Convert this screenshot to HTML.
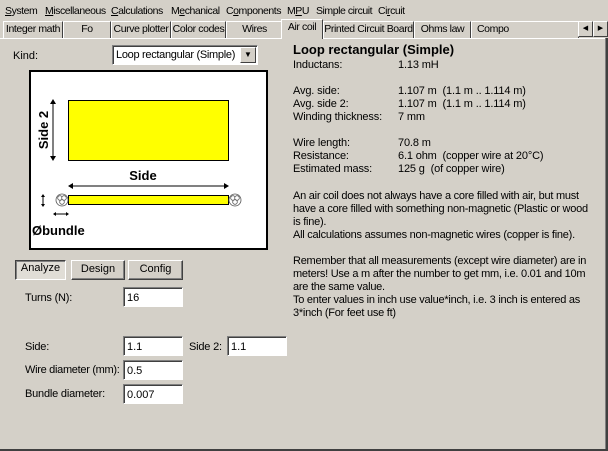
<!DOCTYPE html>
<html><head><style>
*{margin:0;padding:0;box-sizing:border-box}
body{width:608px;height:451px;background:#d4d0c8;font-family:"Liberation Sans",sans-serif;font-size:11px;color:#000;position:relative;overflow:hidden}
.a{position:absolute;white-space:nowrap}
.m{position:absolute;top:5px;font-size:10.5px;white-space:nowrap;letter-spacing:-0.45px}
.tab{position:absolute;top:21px;height:17px;border-top:1px solid #fff;border-left:1px solid #fff;border-right:1px solid #404040;text-align:center;line-height:15px;font-size:10.5px;white-space:nowrap;overflow:hidden;letter-spacing:-0.4px}
.inp{position:absolute;background:#fff;border-top:1px solid #808080;border-left:1px solid #808080;border-right:1px solid #fff;border-bottom:1px solid #fff;box-shadow:inset 1px 1px 0 #404040;height:20px;padding:4px 0 0 3px;font-size:11px;white-space:nowrap;overflow:hidden}
.btn{position:absolute;top:260px;height:20px;border-top:1px solid #fff;border-left:1px solid #fff;border-right:1px solid #404040;border-bottom:1px solid #404040;box-shadow:inset -1px -1px 0 #808080;text-align:center;line-height:17px;font-size:11px}
.r{position:absolute;left:293px;font-size:11px;line-height:11px;white-space:nowrap;letter-spacing:-0.15px}
.v{position:absolute;left:398px;font-size:11px;line-height:11px;white-space:nowrap;letter-spacing:-0.15px}
</style></head><body>
<div class="m" style="left:5px"><u>S</u>ystem</div>
<div class="m" style="left:45px"><u>M</u>iscellaneous</div>
<div class="m" style="left:111px"><u>C</u>alculations</div>
<div class="m" style="left:171px">M<u>e</u>chanical</div>
<div class="m" style="left:226px">C<u>o</u>mponents</div>
<div class="m" style="left:287px">M<u>P</u>U</div>
<div class="m" style="left:316px">Simple circuit</div>
<div class="m" style="left:378px">Ci<u>r</u>cuit</div>
<div class="tab" style="left:3px;width:60px">Integer math</div>
<div class="tab" style="left:63px;width:48px">Fo</div>
<div class="tab" style="left:111px;width:60px">Curve plotter</div>
<div class="tab" style="left:171px;width:55px">Color codes</div>
<div class="tab" style="left:226px;width:57px">Wires</div>
<div class="tab" style="left:281px;top:19px;height:20px;width:42px;background:#d4d0c8;border-bottom:none;z-index:2">Air coil</div>
<div class="tab" style="left:323px;width:91px">Printed Circuit Board</div>
<div class="tab" style="left:414px;width:57px">Ohms law</div>
<div class="tab" style="left:471px;width:108px;text-align:left;padding-left:5px">Compo</div>
<div class="a" style="left:578px;top:21px;width:15px;height:16px;background:#d4d0c8;border-top:1px solid #fff;border-left:1px solid #fff;border-right:1px solid #404040;border-bottom:1px solid #404040;font-size:7px;line-height:14px;text-align:center">◀</div>
<div class="a" style="left:593px;top:21px;width:15px;height:16px;background:#d4d0c8;border-top:1px solid #fff;border-left:1px solid #fff;border-right:1px solid #404040;border-bottom:1px solid #404040;font-size:7px;line-height:14px;text-align:center">▶</div>
<div class="a" style="left:0;top:38px;width:608px;height:1px;background:#fff"></div>
<div class="a" style="left:605px;top:38px;width:1px;height:412px;background:#808080"></div>
<div class="a" style="left:606px;top:38px;width:2px;height:413px;background:#404040"></div>
<div class="a" style="left:0;top:449px;width:608px;height:2px;background:#404040"></div>

<div class="a" style="left:13px;top:50px;font-size:11px">Kind:</div>
<div class="inp" style="left:112px;top:45px;width:146px;height:20px;padding-top:3px;letter-spacing:-0.3px">Loop rectangular (Simple)</div>
<div class="a" style="left:240px;top:47px;width:16px;height:16px;border-top:1px solid #fff;border-left:1px solid #fff;border-right:1px solid #404040;border-bottom:1px solid #404040;background:#d4d0c8;font-size:8px;text-align:center;line-height:14px">▼</div>

<svg class="a" style="left:29px;top:70px" width="239" height="180">
<rect x="1" y="1" width="237" height="178" fill="#fff" stroke="#000" stroke-width="2"/>
<rect x="39.5" y="30.5" width="160" height="60" fill="#ff0" stroke="#000"/>
<line x1="24" y1="30" x2="24" y2="90" stroke="#000"/>
<path d="M21,34 L24,29 L27,34Z M21,86 L24,91 L27,86Z"/>
<text transform="translate(19,60) rotate(-90)" text-anchor="middle" font-family="Liberation Sans" font-weight="bold" font-size="13">Side 2</text>
<text x="114" y="110" text-anchor="middle" font-family="Liberation Sans" font-weight="bold" font-size="13">Side</text>
<line x1="40" y1="116" x2="199" y2="116" stroke="#000"/>
<path d="M44,113 L39,116 L44,119Z M195,113 L200,116 L195,119Z"/>
<rect x="39.5" y="125.5" width="160" height="9" fill="#ff0" stroke="#000"/>
<g fill="#fff" stroke="#555" stroke-width="0.8">
<circle cx="33" cy="130" r="6"/><circle cx="31" cy="128" r="2.3"/><circle cx="35" cy="128" r="2.3"/><circle cx="33" cy="132" r="2.3"/>
<circle cx="206" cy="130" r="6"/><circle cx="204" cy="128" r="2.3"/><circle cx="208" cy="128" r="2.3"/><circle cx="206" cy="132" r="2.3"/>
</g>
<line x1="14" y1="125" x2="14" y2="136" stroke="#000"/>
<path d="M12,127 L14,124 L16,127Z M12,134 L14,137 L16,134Z"/>
<line x1="25" y1="144" x2="39" y2="144" stroke="#000"/>
<path d="M27,142 L24,144 L27,146Z M37,142 L40,144 L37,146Z"/>
<text x="3" y="165" font-family="Liberation Sans" font-weight="bold" font-size="13">Øbundle</text>
</svg>

<div class="btn" style="left:15px;width:51px;border-top-color:#404040;border-left-color:#404040;border-right-color:#fff;border-bottom-color:#fff;box-shadow:inset 1px 1px 0 #808080;background:#e0ddd6;line-height:15px">Analyze</div>
<div class="btn" style="left:71px;width:54px">Design</div>
<div class="btn" style="left:128px;width:55px">Config</div>

<div class="a" style="left:25px;top:292px;letter-spacing:-0.2px">Turns (N):</div>
<div class="inp" style="left:123px;top:287px;width:60px">16</div>
<div class="a" style="left:25px;top:341px;letter-spacing:-0.2px">Side:</div>
<div class="inp" style="left:123px;top:336px;width:60px">1.1</div>
<div class="a" style="left:189px;top:341px;letter-spacing:-0.2px">Side 2:</div>
<div class="inp" style="left:227px;top:336px;width:60px">1.1</div>
<div class="a" style="left:25px;top:364px;letter-spacing:-0.3px">Wire diameter (mm):</div>
<div class="inp" style="left:123px;top:360px;width:60px">0.5</div>
<div class="a" style="left:25px;top:388px;letter-spacing:-0.2px">Bundle diameter:</div>
<div class="inp" style="left:123px;top:384px;width:60px">0.007</div>

<div class="a" style="left:293px;top:42px;font-weight:bold;font-size:13px">Loop rectangular (Simple)</div>
<div class="r" style="top:60px">Inductans:</div><div class="v" style="top:60px">1.13 mH</div>
<div class="r" style="top:86px">Avg. side:</div><div class="v" style="top:86px">1.107 m&nbsp; (1.1 m .. 1.114 m)</div>
<div class="r" style="top:99px">Avg. side 2:</div><div class="v" style="top:99px">1.107 m&nbsp; (1.1 m .. 1.114 m)</div>
<div class="r" style="top:112px">Winding thickness:</div><div class="v" style="top:112px">7 mm</div>
<div class="r" style="top:138px">Wire length:</div><div class="v" style="top:138px">70.8 m</div>
<div class="r" style="top:151px">Resistance:</div><div class="v" style="top:151px">6.1 ohm&nbsp; (copper wire at 20°C)</div>
<div class="r" style="top:164px">Estimated mass:</div><div class="v" style="top:164px">125 g&nbsp; (of copper wire)</div>
<div class="r" style="top:190px;line-height:13px;letter-spacing:-0.25px">An air coil does not always have a core filled with air, but must<br>have a core filled with something non-magnetic (Plastic or wood<br>is fine).<br>All calculations assumes non-magnetic wires (copper is fine).<br><br>Remember that all measurements (except wire diameter) are in<br>meters! Use a m after the number to get mm, i.e. 0.01 and 10m<br>are the same value.<br>To enter values in inch use value*inch, i.e. 3 inch is entered as<br>3*inch (For feet use ft)</div>
</body></html>
